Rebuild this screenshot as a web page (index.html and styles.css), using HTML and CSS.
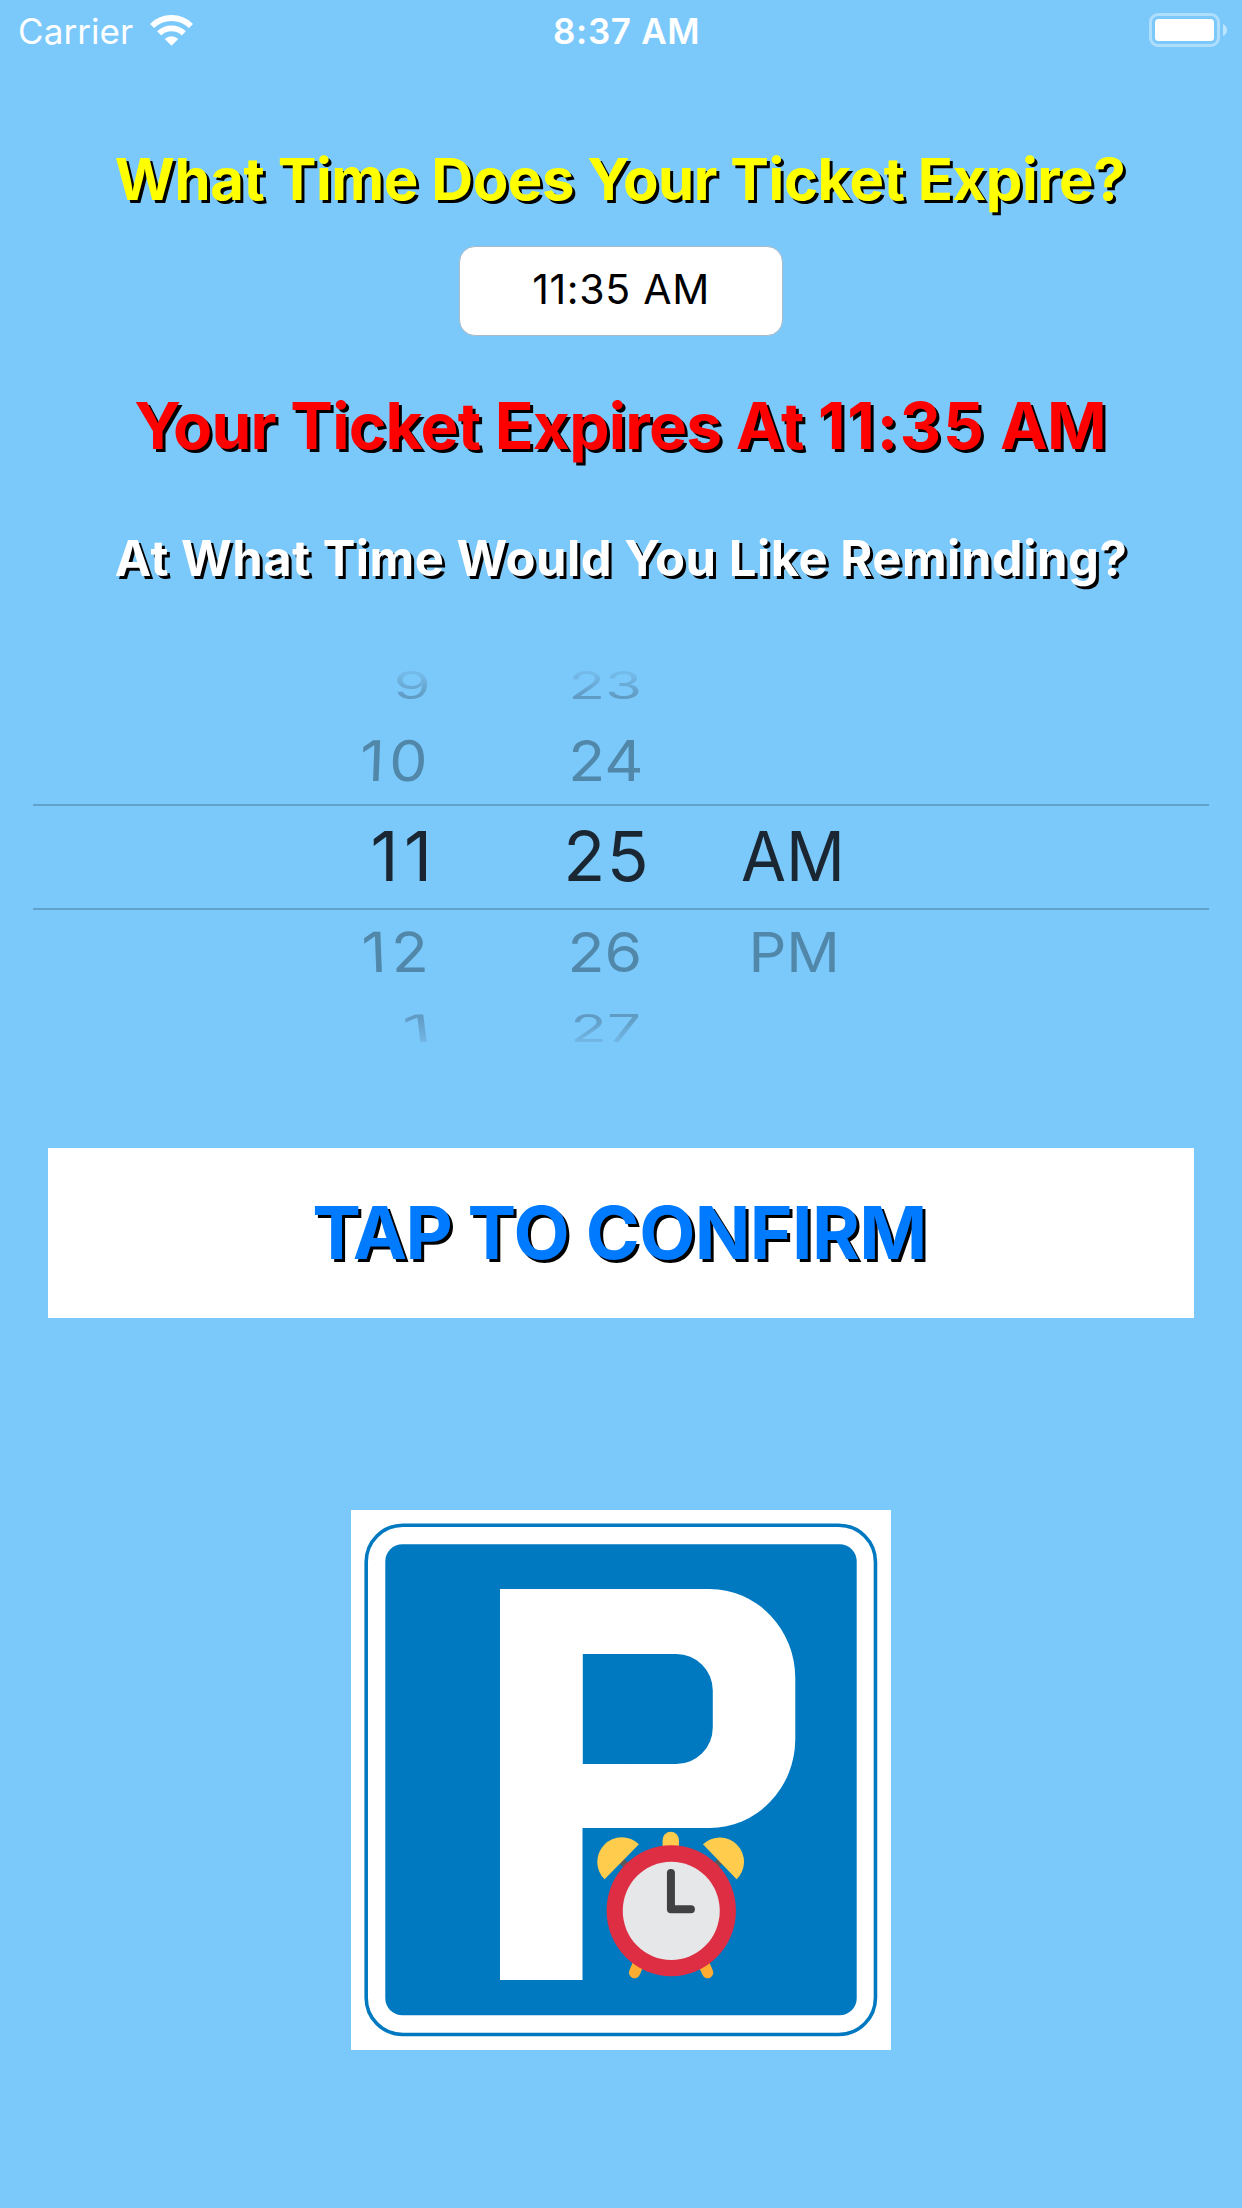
FILE: index.html
```
<!DOCTYPE html>
<html lang="en">
<head>
<meta charset="utf-8">
<title>Parking Reminder</title>
<link rel="stylesheet" href="styles.css">
</head>
<body>
<main class="screen">
  <header class="status">
    <div class="status-left">
      <span class="carrier">Carrier</span>
      <svg class="wifi" viewBox="-21 -30 42 30" fill="none" stroke="#fff" stroke-width="5.7">
        <path d="M-19 -19.4A27.1 27.1 0 0 1 19 -19.4M-12 -12.2A17.1 17.1 0 0 1 12 -12.2"/>
        <path d="M0 0L-6.6 -6.7A9.4 9.4 0 0 1 6.6 -6.7Z" fill="#fff" stroke="none"/>
      </svg>
    </div>
    <span class="clock">8:37 AM</span>
    <svg class="battery" viewBox="0 0 78 34">
      <rect x="1.5" y="1.5" width="68" height="31" rx="7.5" fill="none" stroke="#fff" stroke-opacity=".4" stroke-width="3"/>
      <rect x="6" y="6" width="59" height="22" rx="3.5" fill="#fff"/>
      <path d="M74 11Q78 13 78 17T74 23Z" fill="#fff" fill-opacity=".5"/>
    </svg>
  </header>

  <h1 class="title">What Time Does Your Ticket Expire?</h1>
  <div class="field">11:35 AM</div>
  <h2 class="expires">Your Ticket Expires At <span class="time">11:35</span> AM</h2>
  <h3 class="question">At What Time Would You Like Reminding?</h3>

  <section class="picker">
    <div class="row far top">
      <span class="hour"><b>9</b></span><span class="minute"><b>23</b></span><span class="period"></span>
    </div>
    <div class="row near top">
      <span class="hour one"><b>10</b></span><span class="minute"><b>24</b></span><span class="period"></span>
    </div>
    <div class="row current">
      <span class="hour one"><b>11</b></span><span class="minute"><b>25</b></span><span class="period"><b>AM</b></span>
    </div>
    <div class="row near bottom">
      <span class="hour one"><b>12</b></span><span class="minute"><b>26</b></span><span class="period"><b>PM</b></span>
    </div>
    <div class="row far bottom">
      <span class="hour"><b>1</b></span><span class="minute"><b>27</b></span><span class="period"></span>
    </div>
  </section>

  <button class="confirm" type="button"><span class="tap">TAP</span> TO CONFIRM</button>

  <svg class="sign" viewBox="31 28 1512 1512" role="img" aria-label="Parking alarm">
    <rect x="31" y="28" width="1512" height="1512" fill="#fff"/>
    <rect x="73.5" y="70.5" width="1426" height="1426" rx="103" fill="none" stroke="#0079c1" stroke-width="10"/>
    <rect x="127" y="124" width="1320" height="1319" rx="48" fill="#0079c1"/>
    <g fill="#fff">
      <rect x="448.2" y="249.2" width="231" height="1094.8"/>
      <rect x="448.2" y="249.2" width="400" height="669.2"/>
      <rect x="600" y="249.2" width="675" height="669.2" rx="240" ry="250"/>
    </g>
    <g fill="#0079c1">
      <rect x="680" y="431.2" width="180" height="308"/>
      <rect x="720" y="431.2" width="324" height="308" rx="102"/>
    </g>
    <g transform="translate(672 896) scale(.9333)">
      <g stroke="#ffac33" stroke-width="34" stroke-linecap="round">
        <path d="M180 420L164 458M367 420L383 458"/>
      </g>
      <path d="M118 130L132 116L147 131L133 145ZM399 131L414 116L428 130L413 145Z" fill="#58595b"/>
      <path d="M248 90V60A24.5 24.5 0 0 1 297 60V90Z" fill="#ffcc4d"/>
      <path d="M177 73A73 73 0 0 0 74 178ZM369 73A72.5 72.5 0 0 1 470 178Z" fill="#ffcc4d"/>
      <ellipse cx="274" cy="272" rx="194" ry="196.5" fill="#dd2e44"/>
      <ellipse cx="274" cy="272.5" rx="145.5" ry="147.5" fill="#e6e7e8"/>
      <path d="M273 159V267.5H333" fill="none" stroke="#414042" stroke-width="24" stroke-linecap="round" stroke-linejoin="round"/>
    </g>
  </svg>
</main>
</body>
</html>
```
FILE: styles.css
```
* {
  box-sizing: border-box;
}

body {
  margin: 0;
  background: #7bc9fb;
  font-family: Inter, "Liberation Sans", sans-serif;
}

.screen {
  display: flex;
  flex-direction: column;
  align-items: center;
  width: 1242px;
  height: 2208px;
  overflow: hidden;
}

.status {
  display: grid;
  grid-template-columns: 553px auto 1fr;
  align-items: center;
  width: 100%;
  height: 62px;
  padding-right: 15px;
  color: #fff;
  font-size: 35px;
  line-height: 62px;
}

.status-left {
  display: flex;
  align-items: center;
  gap: 17px;
  padding-left: 18px;
}

.carrier {
  letter-spacing: 0.08px;
}

.wifi {
  width: 43px;
  height: 31px;
  margin-bottom: 1px;
}

.clock {
  font-weight: 600;
  letter-spacing: 0.67px;
}

.battery {
  width: 78px;
  height: 34px;
  justify-self: end;
  margin-bottom: 2px;
}

.title,
.expires,
.question {
  margin: 0;
  font-weight: 700;
  white-space: nowrap;
  text-shadow: 3px 3px 0 #000;
}

.title {
  padding-right: 2px;
  color: #ff0;
  font-size: 58px;
  line-height: 134px;
  height: 134px;
  margin-top: 50px;
  letter-spacing: -0.42px;
}

.field {
  width: 324px;
  height: 90px;
  background: #fff;
  border: 1px solid #a9b9c6;
  border-radius: 16px;
  font-size: 41px;
  line-height: 85px;
  letter-spacing: 0.68px;
  text-align: center;
}

.expires {
  color: #f00;
  font-size: 64px;
  line-height: 180px;
  height: 180px;
  padding-right: 2px;
  letter-spacing: -0.8px;
}

.time {
  letter-spacing: 1.8px;
}

.question {
  color: #fff;
  font-size: 49px;
  line-height: 86px;
  height: 86px;
  letter-spacing: 0.48px;
}

.picker {
  display: grid;
  grid-template-rows: 66px 86px 106px 85px 67px;
  width: 1176px;
  margin-top: 50px;
  font-size: 69px;
}

.row {
  display: grid;
  grid-template-columns: 439px 268px 1fr;
  align-items: center;
  line-height: 1;
}

.row span {
  display: flex;
  align-items: center;
  justify-content: center;
}

.row .hour {
  justify-content: flex-end;
  padding-right: 40px;
}

.row .period {
  justify-content: flex-start;
  padding-left: 1px;
}

.row b {
  display: block;
  font-weight: 400;
}

.hour b {
  transform-origin: right center;
}

.one b {
  letter-spacing: 5.4px;
  margin-right: -5.4px;
}

.current {
  padding-bottom: 2px;
  border-top: 2px solid #62a1c9;
  border-bottom: 2px solid #62a1c9;
  color: #1a2732;
}

.current .minute b {
  letter-spacing: 1.4px;
  margin-right: -1.4px;
}

.current .period b {
  transform: scaleX(0.945);
  transform-origin: left center;
}

.near {
  color: #5188aa;
}

.near b {
  transform: scale(0.88, 0.81);
}

.near.bottom .minute b {
  transform: translateX(-1.5px) scale(0.88, 0.8);
}

.near .period b {
  transform: scale(0.86, 0.8);
}

.near.top .hour b {
  transform: translateX(-5px) scale(0.88, 0.81) skewX(-2deg);
}

.near.bottom .hour b {
  transform: translateX(-4px) scale(0.88, 0.8) skewX(2deg);
}

.far b {
  transform: translate(-1px, -1px) scale(0.87, 0.55);
  background: linear-gradient(#74bae9 20%, #609bc3 80%);
  -webkit-background-clip: text;
  background-clip: text;
  color: transparent;
}

.far.bottom b {
  background-image: linear-gradient(#609bc3 20%, #72b7e5 85%);
}

.far.bottom .minute b {
  transform: translateY(-1px) scale(0.87, 0.55);
}

.far.bottom .hour b {
  transform: translate(-1px, -1px) scale(1, 0.55) skewX(4deg);
}

.confirm {
  width: 1146px;
  height: 170px;
  margin-top: 86px;
  padding: 0 3px 0 0;
  border: 0;
  background: #fff;
  color: #007aff;
  font: 700 73px/170px Inter, "Liberation Sans", sans-serif;
  letter-spacing: -0.6px;
  text-shadow: 3px 3px 0 #000;
}

.tap {
  letter-spacing: -1.8px;
}

.sign {
  width: 540px;
  height: 540px;
  margin-top: 192px;
}
```
